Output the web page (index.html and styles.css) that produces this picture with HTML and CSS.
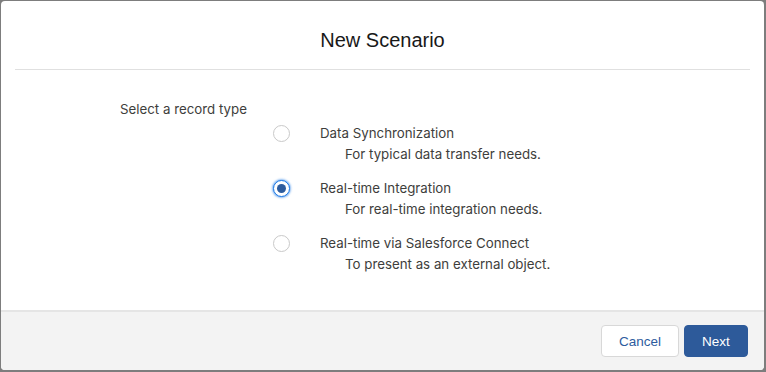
FILE: index.html
```html
<!DOCTYPE html>
<html>
<head>
<meta charset="utf-8">
<link rel="stylesheet" href="styles.css">
</head>
<body>
<div class="modal">
  <header class="modal-header">
    <h2 class="modal-title">New Scenario</h2>
  </header>
  <div class="modal-body">
    <div class="legend">Select a record type</div>
    <div class="options">
      <div class="option">
        <span class="radio"></span>
        <div class="option-text">
          <div class="option-label">Data Synchronization</div>
          <div class="option-desc">For typical data transfer needs.</div>
        </div>
      </div>
      <div class="option">
        <span class="radio checked"></span>
        <div class="option-text">
          <div class="option-label">Real-time Integration</div>
          <div class="option-desc">For real-time integration needs.</div>
        </div>
      </div>
      <div class="option">
        <span class="radio"></span>
        <div class="option-text">
          <div class="option-label">Real-time via Salesforce Connect</div>
          <div class="option-desc">To present as an external object.</div>
        </div>
      </div>
    </div>
  </div>
  <footer class="modal-footer">
    <button class="btn btn-neutral">Cancel</button>
    <button class="btn btn-brand">Next</button>
  </footer>
</div>
</body>
</html>
```
FILE: styles.css
```css
html, body {
  margin: 0;
  padding: 0;
}
body {
  background: #7d7d7d;
  width: 766px;
  height: 372px;
  overflow: hidden;
  font-family: Inter, "Liberation Sans", Arial, sans-serif;
  color: #3e3e3c;
}
.modal {
  margin: 1px 2px 0 1px;
  width: 763px;
  height: 369px;
  background: #fff;
  border-radius: 4px;
  display: flex;
  flex-direction: column;
  overflow: hidden;
}
.modal-header {
  margin: 0 14px;
  padding: 27px 0 16px;
  border-bottom: 1px solid #e0e0e0;
  text-align: center;
}
.modal-title {
  margin: 0;
  font-family: "Liberation Sans", Arial, sans-serif;
  font-size: 20px;
  line-height: 25px;
  font-weight: normal;
  color: #181818;
}
.modal-body {
  flex: 1;
  padding: 30px 0 0 119px;
}
.legend {
  font-size: 13.3px;
  line-height: 18px;
  color: #3e3e3c;
}
.options {
  margin-top: 6px;
  margin-left: 153px;
  display: flex;
  flex-direction: column;
  gap: 16px;
}
.option {
  display: flex;
  align-items: flex-start;
}
.radio {
  box-sizing: border-box;
  width: 17px;
  height: 17px;
  margin-top: 1px;
  border: 1px solid #c9c9c9;
  border-radius: 50%;
  background: #fff;
  flex: none;
  position: relative;
}
.radio.checked {
  border: 1px solid #1b78e6;
  box-shadow: 0 0 2px 1px rgba(27, 120, 230, 0.55);
}
.radio.checked::after {
  content: "";
  position: absolute;
  left: 3px;
  top: 3px;
  width: 9px;
  height: 9px;
  border-radius: 50%;
  background: #2d5c9e;
}
.option-text {
  margin-left: 30px;
  font-size: 13.3px;
  line-height: 18px;
  color: #3e3e3c;
}
.option-desc {
  margin-top: 3px;
  margin-left: 25px;
}
.modal-footer {
  flex: none;
  height: 45px;
  padding: 13px 16px 0 0;
  border-top: 2px solid #e5e5e5;
  background: #f3f3f3;
  display: flex;
  justify-content: flex-end;
  align-items: flex-start;
  gap: 5px;
}
.btn {
  box-sizing: border-box;
  height: 32px;
  border-radius: 4px;
  font-family: "Liberation Sans", Arial, sans-serif;
  font-size: 13.5px;
  padding: 0;
  cursor: pointer;
}
.btn-neutral {
  width: 78px;
  background: #fff;
  border: 1px solid #d8d8d8;
  color: #2d5c9e;
}
.btn-brand {
  width: 64px;
  background: #2d5a9a;
  border: 1px solid #2d5a9a;
  color: #fff;
}
```
